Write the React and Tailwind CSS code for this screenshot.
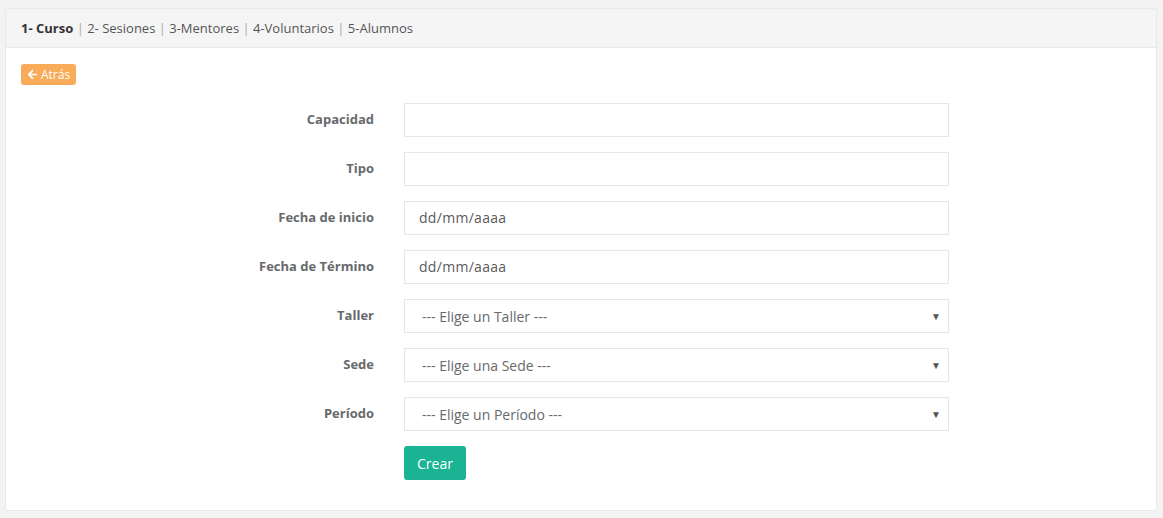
import { useState } from 'react';

const FIELDS = [
  { label: 'Capacidad', type: 'text' },
  { label: 'Tipo', type: 'text' },
  { label: 'Fecha de inicio', type: 'date' },
  { label: 'Fecha de Término', type: 'date' },
  { label: 'Taller', type: 'select', placeholder: '--- Elige un Taller ---' },
  { label: 'Sede', type: 'select', placeholder: '--- Elige una Sede ---' },
  { label: 'Período', type: 'select', placeholder: '--- Elige un Período ---' },
];

const STEPS = ['2- Sesiones', '3-Mentores', '4-Voluntarios', '5-Alumnos'];

function Field({ field }) {
  if (field.type === 'select') {
    return (
      <div className="relative w-[545px] h-[34px] border border-[#e5e6e7] bg-white flex items-center pl-[17px] text-[14px] text-[#676a6c]">
        {field.placeholder}
        <span className="absolute right-[7px] top-[9px] text-[10px] text-[#555]">▼</span>
      </div>
    );
  }
  return (
    <div className="w-[545px] h-[34px] border border-[#e5e6e7] bg-white flex items-center pl-[14px] pb-[1px] text-[14px] text-[#5a5a5a] tracking-[0.3px]">
      {field.type === 'date' ? 'dd/mm/aaaa' : ''}
    </div>
  );
}

export default function App() {
  const [step] = useState(1);

  return (
    <div
      className="min-h-[518px] bg-[#f3f3f4] pt-[8px] px-[5px] pb-[7px] text-[#676a6c] text-[13px]"
      style={{ fontFamily: '"Open Sans", "Liberation Sans", sans-serif' }}
    >
      <div className="w-[1152px] h-[503px] bg-white border border-[#e7eaec] rounded-[2px]">
        {/* pasos */}
        <div className="h-[39px] bg-[#f5f5f5] border-b border-[#e7eaec] flex items-center px-[15px] pt-[1px] text-[#555] whitespace-pre">
          <span className="font-bold text-[#333]">{step}- Curso</span>
          {STEPS.map((s) => (
            <span key={s}>
              <span className="text-[#aaa]"> | </span>
              {s}
            </span>
          ))}
        </div>

        <div className="px-[15px] pt-[16px]">
          <button className="h-[21px] px-[6px] rounded-[3px] bg-[#f8ac59] text-white text-[12px] flex items-center gap-[3px]">
            <svg width="11" height="11" viewBox="0 0 448 512" fill="currentColor">
              <path d="M257.5 445.1l-22.2 22.2c-9.4 9.4-24.6 9.4-33.9 0L7 273c-9.4-9.4-9.4-24.6 0-33.9L201.4 44.7c9.4-9.4 24.6-9.4 33.9 0l22.2 22.2c9.5 9.5 9.3 25-.4 34.3L136.6 216H424c13.3 0 24 10.7 24 24v32c0 13.3-10.7 24-24 24H136.6l120.5 114.8c9.8 9.3 10 24.8.4 34.3z" />
            </svg>
            Atrás
          </button>

          <div className="mt-[18px] flex flex-col gap-[15px]">
            {FIELDS.map((f) => (
              <div key={f.label} className="flex">
                <label className="w-[353px] pt-[7px] text-right font-bold text-[#676a6c]">
                  {f.label}
                </label>
                <div className="ml-[30px]">
                  <Field field={f} />
                </div>
              </div>
            ))}
            <div className="flex">
              <div className="w-[383px]" />
              <button className="h-[34px] px-[13px] rounded-[3px] bg-[#1ab394] text-white text-[14px]">
                Crear
              </button>
            </div>
          </div>
        </div>
      </div>
    </div>
  );
}
